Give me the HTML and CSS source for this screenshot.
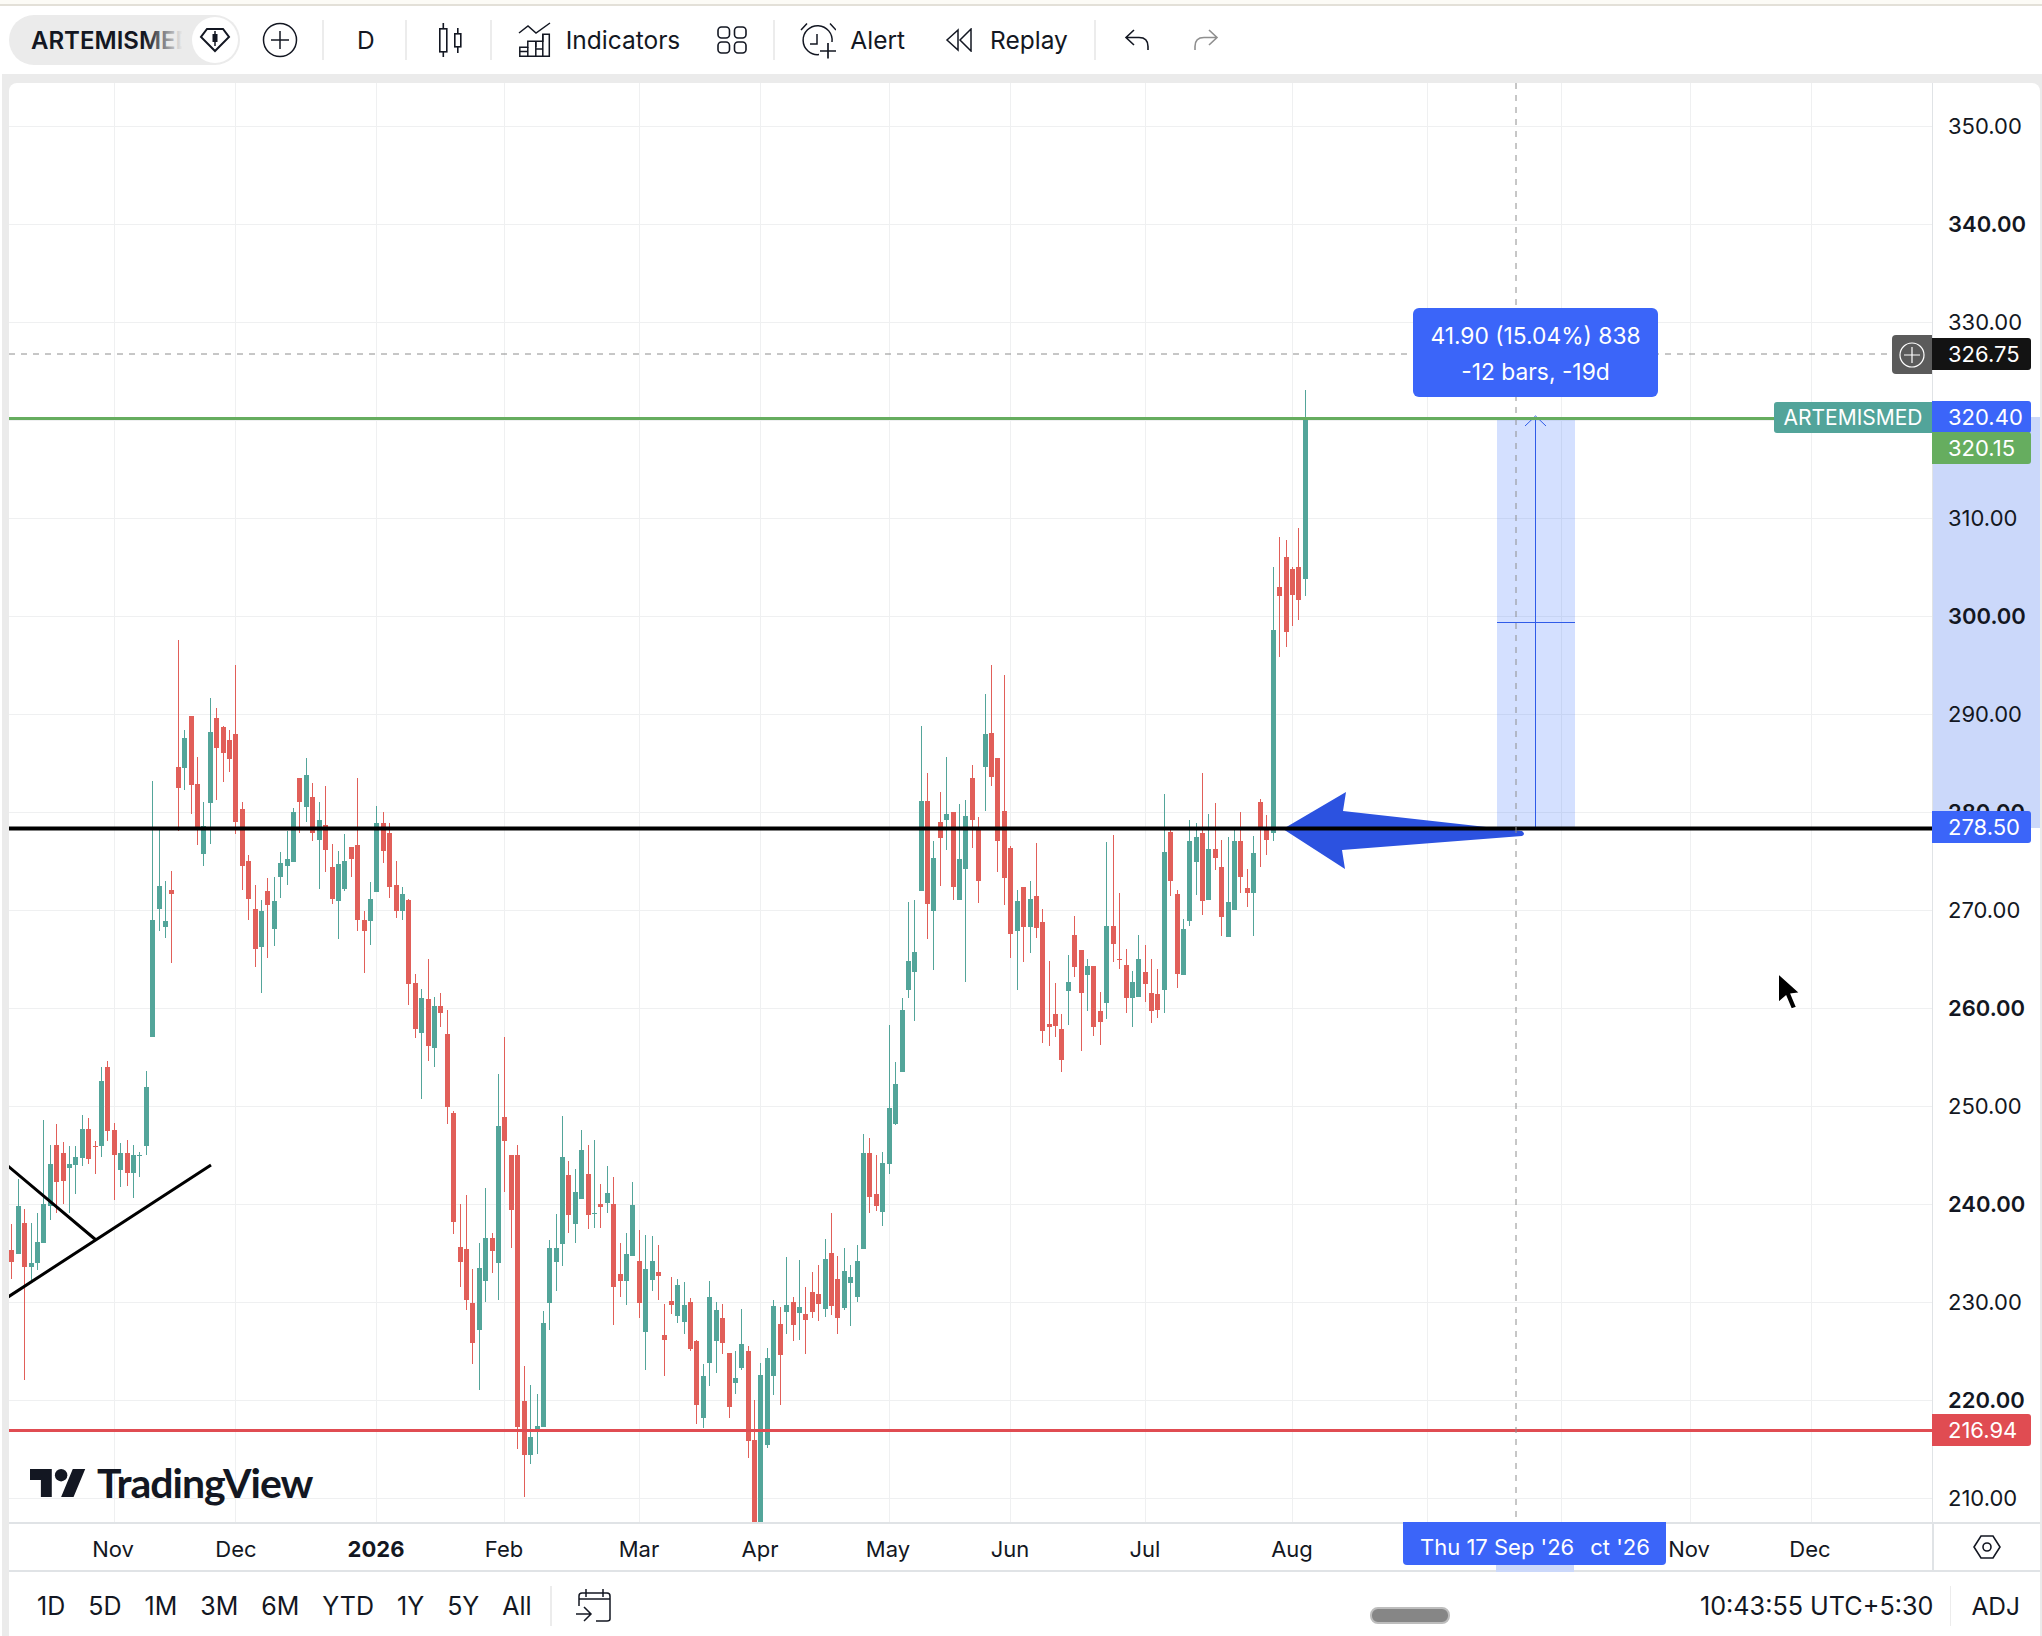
FILE: index.html
```html
<!DOCTYPE html>
<html lang="en">
<head>
    <meta charset="UTF-8">
    <title>ARTEMISMED - TradingView</title>
    <link rel="stylesheet" href="styles.css">
</head>
<body>
    <div class="top-edge"></div>

    <!-- Top toolbar -->
    <header class="toolbar">
        <div class="symbol-pill">
            <span class="symbol-name">ARTEMISMED</span>
            <span class="symbol-badge">
                <svg width="32" height="26" viewBox="0 0 32 26" fill="none" stroke="#131722" stroke-width="2"><path d="M8 2h16l6 8-14 14L2 10z"/><rect x="13.500" y="7" width="5" height="8" fill="#131722" stroke="none"/><path d="M16 4v15" stroke-width="1.500"/></svg>
            </span>
        </div>
        <svg class="ic ic-plus" width="36" height="36" viewBox="0 0 36 36" fill="none" stroke="#131722" stroke-width="1.500"><circle cx="18" cy="18" r="16.500"/><path d="M18 9v18M9 18h18"/></svg>
        <span class="sep sep-a"></span>
        <span class="tool-text tool-d">D</span>
        <span class="sep sep-b"></span>
        <svg class="ic ic-candle" width="24" height="36" viewBox="0 0 24 36" fill="none" stroke="#131722" stroke-width="1.600"><rect x="1.800" y="6.800" width="7" height="23"/><path d="M5.300 1v5.800M5.300 30v5"/><rect x="16.800" y="11.800" width="6" height="13"/><path d="M19.800 6v5.800M19.800 25v6"/></svg>
        <span class="sep sep-c"></span>
        <div class="tool tool-indicators">
            <svg width="33" height="36" viewBox="0 0 33 36" fill="none" stroke="#131722" stroke-width="1.500"><path d="M1 11l9-7 8 7L32 1"/><path d="M1.800 34.200v-9h8v-6h8v6-6h7v-7h6.500v22z"/><path d="M9.800 25.200v9M17.800 19.200v15M24.800 12.200v22M1.800 29.500h8M17.800 27h7"/></svg>
            <span>Indicators</span>
        </div>
        <svg class="ic ic-layout" width="30" height="28" viewBox="0 0 30 28" fill="none" stroke="#131722" stroke-width="1.600"><rect x="1" y="1" width="11.500" height="11" rx="3.500"/><rect x="17.500" y="1" width="11.500" height="11" rx="3.500"/><rect x="1" y="16" width="11.500" height="11" rx="3.500"/><rect x="17.500" y="16" width="11.500" height="11" rx="3.500"/></svg>
        <span class="sep sep-d"></span>
        <div class="tool tool-alert">
            <svg width="36" height="37" viewBox="0 0 36 37" fill="none" stroke="#131722" stroke-width="1.500"><path d="M19 32.600A14.500 14.500 0 1 1 32 20"/><path d="M17 12v10h-7"/><path d="M1 8l6-6.500M30 1.500L36 8"/><path d="M28 21v15.500M20 29h16" stroke-width="1.700"/></svg>
            <span>Alert</span>
        </div>
        <div class="tool tool-replay">
            <svg width="27" height="24" viewBox="0 0 27 24" fill="none" stroke="#131722" stroke-width="1.500"><path d="M13 2L2 12l11 10zM26 1L15 12l11 11z"/></svg>
            <span>Replay</span>
        </div>
        <span class="sep sep-e"></span>
        <svg class="ic ic-undo" width="25" height="22" viewBox="0 0 25 22" fill="none" stroke="#131722" stroke-width="1.600"><path d="M10 1L2 8.500l8 7.500M2 8.500h13q9 0 9 9V21"/></svg>
        <svg class="ic ic-redo" width="25" height="22" viewBox="0 0 25 22" fill="none" stroke="#8f8f8f" stroke-width="1.600"><path d="M15 1l8 7.500-8 7.500M23 8.500H10q-9 0-9 9V21"/></svg>
    </header>

    <main class="workspace">
        <div class="chart-card">
            <div class="chart-row">
                <!-- Candles and drawings, in page pixels -->
                <div class="pane">
                    <svg id="chart" class="chart-svg" viewBox="9 83 1923 1439">
                        <g id="grid" class="grid" shape-rendering="crispEdges"></g>
                        <rect class="measure-box" x="1497" y="417" width="78" height="411"/>
                        <g id="candles" shape-rendering="crispEdges"></g>
                        <path class="measure-line" d="M1535.500 417V828M1497 622.500H1575M1525 426l10.500-10 10.500 10"/>
                        <path class="draw-arrow" d="M1283 829L1346 792L1343 811L1522 831Q1526 834 1522 836L1342 850L1345 869Z"/>
                        <path class="trend" d="M8 1166L96 1240M8 1297L211 1165"/>
                        <path class="line-green" d="M9 418.500H1932"/>
                        <path class="line-black" d="M9 828.500H1932"/>
                        <path class="line-red" d="M9 1430.500H1932"/>
                        <path class="cross" d="M1516 83V1517M9 354H1892"/>
                    </svg>

                    <div class="logo">
                        <svg width="56" height="28" viewBox="0 0 36 18" fill="#131722"><path d="M14 18H7V7H0V0h14zM28 18h-8L27.500 0h8z"/><circle cx="20" cy="4" r="4"/></svg>
                        <span>TradingView</span>
                    </div>

                    <div class="measure-tip">
                        <div>41.90 (15.04%) 838</div>
                        <div>-12 bars, -19d</div>
                    </div>

                    <div class="add-box">
                        <svg width="26" height="26" viewBox="0 0 26 26" fill="none" stroke="#fff" stroke-width="1.200"><circle cx="13" cy="13" r="12"/><path d="M13 5v16M5 13h16"/></svg>
                    </div>
                    <div class="symbol-tag">ARTEMISMED</div>

                    <svg class="cursor" width="24" height="42" viewBox="0 0 22 38"><path d="M2 1v27l7-6 5 12 5-2-5-12 8-1z" fill="#000" stroke="#fff" stroke-width="1.500"/></svg>
                </div>
                <div id="price-axis" class="price-axis"></div>
            </div>

            <div id="time-row" class="time-row">
                <div id="time-axis" class="time-axis">
                    <span class="time-band"></span>
                    <div class="time-flag"><span>Thu 17 Sep '26</span><span>ct '26</span></div>
                </div>
                <div class="time-corner">
                    <svg width="28" height="24" viewBox="0 0 28 24" fill="none" stroke="#131722" stroke-width="1.600"><path d="M8 1h12l7 11-7 11H8L1 12z"/><circle cx="14" cy="12" r="4"/></svg>
                </div>
            </div>

            <footer class="range-row">
                <div class="ranges">
                    <span>1D</span><span>5D</span><span>1M</span><span>3M</span><span>6M</span><span>YTD</span><span>1Y</span><span>5Y</span><span>All</span>
                </div>
                <span class="sep sep-range"></span>
                <svg class="ic-date" width="35" height="33" viewBox="0 0 35 33" fill="none" stroke="#131722" stroke-width="1.500"><path d="M3 17V7q0-3 3-3h25q3 0 3 3v23q0 2-3 2H20M3 10h31M10 0v8M27 0v8"/><path d="M0 25h14M8 18l7 7-7 7"/></svg>
                <span class="scroll-pill"></span>
                <span class="clock">10:43:55 UTC+5:30</span>
                <span class="sep sep-adj"></span>
                <span class="adj">ADJ</span>
            </footer>
        </div>
    </main>

    <script src="chart.js"></script>
</body>
</html>
```

FILE: styles.css
```css
* {
    box-sizing: border-box;
}
body {
    margin: 0;
    height: 1636px;
    overflow: hidden;
    font-family: Inter, "Liberation Sans", sans-serif;
    color: #131722;
    background-color: #fff;
}
svg {
    display: block;
    flex: none;
}
.top-edge {
    height: 6px;
    background-color: #fcfbf6;
    border-bottom: 2px solid #e3e0d8;
}

/* Toolbar */
.toolbar {
    display: flex;
    align-items: center;
    height: 68px;
    padding-left: 9px;
    font-size: 24.500px;
}
.symbol-pill {
    display: flex;
    align-items: center;
    width: 231px;
    height: 50px;
    padding-left: 22px;
    border-radius: 25px;
    background-color: #ebebeb;
    position: relative;
    font-size: 24px;
}
.symbol-name {
    width: 160px;
    overflow: hidden;
    font-weight: 600;
    white-space: nowrap;
}
.symbol-name::after {
    content: "";
    position: absolute;
    left: 136px;
    top: 0;
    width: 50px;
    height: 50px;
    background: linear-gradient(to right, rgba(235, 235, 235, 0), #ebebeb 75%);
}
.symbol-badge {
    display: flex;
    align-items: center;
    justify-content: center;
    position: absolute;
    right: 2px;
    top: 2px;
    width: 46px;
    height: 46px;
    border-radius: 50%;
    background-color: #fff;
}
.ic-plus { margin-left: 22px; }
.ic-candle { margin-left: 31px; }
.ic-layout { margin-left: 37px; }
.ic-undo { margin-left: 28px; }
.ic-redo { margin-left: 45px; }
.sep {
    flex: none;
    width: 2px;
    height: 40px;
    background-color: #ececec;
}
.sep-a { margin-left: 24px; }
.sep-b { margin-left: 30px; }
.sep-c { margin-left: 28px; }
.sep-d { margin-left: 26px; }
.sep-e { margin-left: 26px; }
.tool-d { margin-left: 33px; }
.tool {
    display: flex;
    align-items: center;
}
.tool-indicators { margin-left: 26px; gap: 15px; }
.tool-alert { margin-left: 25px; gap: 14px; }
.tool-replay { margin-left: 40px; gap: 18px; }

/* Chart */
.workspace {
    height: 1562px;
    padding: 9px 2px 0 7px;
    border-left: 2px solid #fff;
    background-color: #ebebeb;
}
.chart-card {
    height: 100%;
    border-radius: 8px 8px 0 0;
    background-color: #fff;
    overflow: hidden;
}
.chart-row {
    display: flex;
    height: 1439px;
}
.pane {
    position: relative;
    width: 1923px;
    flex: none;
}
.chart-svg {
    width: 1923px;
    height: 1439px;
}
.grid path {
    stroke: #eff0f1;
    stroke-width: 1;
    fill: none;
}
.measure-box {
    fill: #2962ff;
    fill-opacity: 0.2;
}
.measure-line {
    fill: none;
    stroke: #2f5be8;
    stroke-width: 1;
}
.draw-arrow {
    fill: #2c52e0;
}
.trend {
    fill: none;
    stroke: #000;
    stroke-width: 3;
}
.line-green {
    stroke: #66ad5f;
    stroke-width: 3;
}
.line-black {
    stroke: #000;
    stroke-width: 4;
}
.line-red {
    stroke: #e04c52;
    stroke-width: 3;
}
.cross {
    fill: none;
    stroke: #8e8e8e;
    stroke-width: 1;
    stroke-dasharray: 6 6;
}
.logo {
    position: absolute;
    left: 21px;
    top: 1375px;
    display: flex;
    align-items: center;
    gap: 11px;
    font-family: Lato, Inter, sans-serif;
    font-size: 41px;
    font-weight: 700;
    letter-spacing: -1px;
    white-space: nowrap;
}
.measure-tip {
    position: absolute;
    left: 1404px;
    top: 225px;
    width: 245px;
    height: 89px;
    padding-top: 10px;
    border-radius: 6px;
    background-color: #3b65f9;
    color: #fff;
    font-size: 22.800px;
    line-height: 36px;
    text-align: center;
    white-space: nowrap;
}
.add-box {
    position: absolute;
    right: 0;
    top: 252px;
    display: flex;
    align-items: center;
    justify-content: center;
    width: 40px;
    height: 39px;
    border-radius: 4px 0 0 4px;
    background-color: #5b5b5b;
}
.symbol-tag {
    position: absolute;
    right: 0;
    top: 319px;
    width: 158px;
    height: 31px;
    border-radius: 3px 0 0 3px;
    background-color: #52a49a;
    color: #fff;
    font-size: 21px;
    line-height: 31px;
    text-align: center;
}
.cursor {
    position: absolute;
    left: 1767px;
    top: 889px;
}

/* Price axis */
.price-axis {
    position: relative;
    width: 108px;
    flex: none;
    border-left: 1px solid #e0e3e6;
    font-size: 22px;
}
.price-band {
    position: absolute;
    left: 0;
    right: 0;
    top: 334px;
    height: 411px;
    background-color: #cbd8fa;
}
.price {
    position: absolute;
    left: 15px;
    transform: translateY(-50%);
    line-height: 24px;
}
.price.major {
    font-weight: 600;
}
.mark {
    position: absolute;
    left: -1px;
    width: 99px;
    height: 32px;
    padding-left: 16px;
    border-radius: 0 3px 3px 0;
    color: #fff;
    line-height: 32px;
    transform: translateY(-50%);
}

/* Time axis */
.time-row {
    display: flex;
    height: 50px;
    border-top: 2px solid #e0e3e6;
    border-bottom: 2px solid #e0e3e6;
    font-size: 22px;
}
.time-axis {
    position: relative;
    width: 1923px;
    flex: none;
}
.time-label {
    position: absolute;
    top: 13px;
    line-height: 24px;
    transform: translateX(-50%);
}
.time-label.major {
    font-weight: 700;
}
.time-band {
    position: absolute;
    left: 1487px;
    width: 78px;
    top: 40px;
    height: 8px;
    background-color: #cbd8fa;
}
.time-flag {
    position: absolute;
    left: 1394px;
    top: -2px;
    display: flex;
    gap: 16px;
    width: 263px;
    height: 43px;
    padding: 12px 0 0 17px;
    border-radius: 0 0 4px 4px;
    background-color: #3b65f9;
    color: #fff;
    font-size: 22px;
    line-height: 26px;
    white-space: nowrap;
}
.time-corner {
    display: flex;
    align-items: center;
    justify-content: center;
    width: 108px;
    border-left: 2px solid #e0e3e6;
}

/* Bottom bar */
.range-row {
    position: relative;
    display: flex;
    align-items: center;
    height: 64px;
    padding: 3px 0 0 28px;
    font-size: 25px;
}
.ranges {
    display: flex;
    gap: 23px;
}
.sep-range { margin-left: 18px; }
.ic-date { margin-left: 24px; }
.scroll-pill {
    position: absolute;
    left: 1361px;
    top: 35px;
    width: 80px;
    height: 17px;
    border: 2px solid #bdbdbd;
    border-radius: 8px;
    background-color: #868686;
}
.clock {
    margin-left: auto;
    white-space: nowrap;
    font-size: 25.200px;
}
.sep-adj {
    width: 1px;
    margin-left: 17px;
}
.adj {
    margin: 0 20px 0 20px;
    font-size: 24.500px;
}
```

FILE: chart.js
```js
// Daily candles in page pixels: x, colour, wick top, body top, body bottom, wick bottom
const CANDLES = [
    [11,'r',1224,1250,1262,1279], [18,'g',1179,1206,1254,1254], [24,'r',1209,1223,1267,1380], [31,'g',1223,1263,1267,1280],
    [37,'g',1213,1242,1263,1270], [43,'g',1120,1204,1243,1243], [50,'g',1145,1164,1206,1220], [56,'r',1124,1145,1182,1213],
    [63,'r',1142,1153,1181,1204], [69,'g',1146,1164,1168,1213], [75,'g',1146,1157,1165,1194], [82,'g',1115,1129,1158,1166],
    [88,'r',1118,1129,1159,1164], [95,'r',1141,1146,1147,1174], [101,'g',1067,1081,1146,1157], [107,'r',1061,1067,1131,1141],
    [114,'r',1123,1130,1155,1200], [120,'g',1143,1153,1170,1187], [127,'r',1140,1153,1173,1186], [133,'g',1145,1155,1173,1198],
    [139,'g',1152,1155,1156,1177], [146,'g',1071,1087,1146,1155], [152,'g',781,920,1037,1037], [159,'g',827,886,909,931],
    [165,'g',881,921,927,938], [171,'r',871,890,894,963], [178,'r',640,767,788,831], [184,'g',730,738,768,790],
    [191,'r',716,716,785,814], [197,'r',757,784,829,845], [203,'g',802,826,854,866], [210,'g',698,732,803,844],
    [216,'r',708,718,748,800], [223,'r',726,727,753,782], [229,'r',730,740,759,772], [235,'r',665,734,822,834],
    [242,'r',802,809,866,890], [248,'r',855,861,899,920], [255,'r',885,909,949,967], [261,'g',900,911,947,993],
    [267,'r',878,891,905,958], [274,'g',877,901,929,946], [280,'g',852,863,877,898], [287,'g',831,859,866,885],
    [293,'g',808,812,862,862], [299,'r',778,778,802,833], [306,'g',758,775,807,822], [312,'r',783,797,833,841],
    [319,'g',802,820,840,889], [325,'r',786,825,850,872], [332,'r',844,867,899,904], [338,'g',851,864,901,939],
    [344,'g',834,861,889,891], [351,'r',847,847,859,877], [357,'r',778,845,920,931], [364,'r',911,920,931,973],
    [370,'g',882,899,921,945], [376,'g',806,823,892,892], [383,'r',812,823,851,863], [389,'r',823,833,887,898],
    [396,'r',861,885,911,918], [402,'g',887,894,911,920], [408,'r',899,900,984,1005], [415,'r',974,983,1029,1038],
    [421,'g',989,998,1033,1099], [428,'r',959,999,1046,1061], [434,'g',997,1006,1048,1067], [440,'r',993,1006,1013,1027],
    [447,'r',1010,1034,1107,1124], [453,'r',1111,1113,1222,1234], [460,'r',1204,1247,1262,1287], [466,'r',1195,1249,1300,1310],
    [472,'r',1269,1303,1343,1364], [479,'g',1243,1268,1330,1390], [485,'g',1188,1238,1281,1302], [492,'r',1233,1238,1251,1273],
    [498,'g',1074,1126,1263,1300], [504,'r',1037,1117,1141,1192], [511,'r',1155,1155,1210,1248], [517,'r',1145,1155,1427,1449],
    [524,'r',1366,1401,1455,1497], [530,'g',1385,1437,1455,1464], [537,'g',1394,1426,1431,1454], [543,'g',1311,1323,1427,1427],
    [549,'g',1240,1248,1303,1330], [556,'g',1214,1248,1262,1291], [562,'g',1116,1157,1244,1266], [568,'r',1161,1175,1215,1233],
    [575,'g',1169,1192,1224,1243], [581,'g',1130,1150,1199,1199], [588,'r',1145,1174,1215,1229], [594,'g',1140,1213,1214,1228],
    [600,'r',1184,1204,1207,1228], [607,'g',1166,1193,1203,1213], [613,'r',1177,1204,1287,1325], [620,'r',1243,1274,1281,1297],
    [626,'g',1233,1254,1281,1305], [632,'g',1182,1205,1256,1256], [639,'r',1230,1261,1303,1318], [645,'g',1235,1269,1332,1370],
    [652,'g',1236,1261,1280,1291], [658,'r',1245,1272,1276,1300], [664,'r',1304,1335,1340,1376], [671,'r',1277,1301,1305,1314],
    [677,'g',1279,1285,1316,1323], [684,'g',1282,1305,1322,1334], [690,'r',1298,1302,1349,1351], [696,'r',1340,1341,1405,1424],
    [703,'g',1364,1376,1418,1428], [709,'g',1281,1297,1363,1386], [716,'g',1302,1310,1341,1373], [722,'r',1304,1318,1343,1354],
    [729,'r',1353,1353,1407,1418], [735,'g',1351,1378,1383,1394], [741,'g',1309,1344,1368,1370], [748,'r',1346,1351,1441,1458],
    [754,'r',1400,1440,1522,1522], [760,'g',1363,1375,1522,1522], [767,'g',1348,1358,1445,1448], [773,'g',1300,1306,1376,1395],
    [780,'r',1307,1324,1355,1405], [786,'g',1257,1305,1312,1334], [793,'r',1297,1302,1325,1341], [799,'g',1260,1307,1313,1340],
    [805,'r',1287,1314,1320,1354], [812,'r',1272,1292,1312,1318], [818,'r',1265,1294,1304,1321], [825,'g',1239,1259,1309,1317],
    [831,'r',1213,1253,1306,1315], [837,'r',1256,1279,1318,1334], [844,'g',1248,1271,1308,1310], [850,'g',1265,1277,1283,1326],
    [857,'g',1245,1261,1297,1302], [863,'g',1134,1153,1249,1249], [869,'r',1138,1153,1197,1213], [876,'r',1155,1194,1206,1211],
    [882,'g',1152,1163,1212,1226], [889,'g',1025,1108,1164,1174], [895,'g',1062,1084,1124,1125], [902,'g',998,1010,1072,1072],
    [908,'g',902,961,990,998], [914,'g',900,952,972,1021], [921,'g',726,801,891,891], [927,'r',773,801,904,939],
    [933,'g',841,858,911,970], [940,'r',792,822,838,886], [946,'g',757,814,820,850], [953,'r',812,812,887,900],
    [959,'g',804,859,900,900], [965,'g',800,816,869,982], [972,'r',765,778,820,848], [978,'r',817,828,881,903],
    [985,'g',694,734,767,811], [991,'r',665,733,777,786], [997,'r',758,758,841,872], [1004,'r',675,811,878,905],
    [1010,'r',846,848,934,958], [1017,'g',890,901,931,990], [1023,'r',887,887,927,962], [1030,'g',881,899,927,953],
    [1036,'r',843,896,928,938], [1042,'r',909,922,1031,1043], [1049,'r',961,1024,1027,1046], [1055,'r',983,1014,1026,1037],
    [1061,'r',1014,1029,1060,1072], [1068,'g',955,982,991,1025], [1074,'r',916,935,967,977], [1081,'r',950,950,993,1051],
    [1087,'g',959,966,975,1011], [1093,'r',966,966,1027,1036], [1100,'r',992,1011,1022,1045], [1106,'g',842,926,1003,1019],
    [1113,'r',835,926,944,962], [1119,'r',893,959,960,969], [1126,'r',949,965,998,1013], [1132,'g',971,982,998,1027],
    [1138,'g',935,959,997,997], [1145,'r',945,972,984,1002], [1151,'r',959,993,1011,1023], [1157,'r',969,994,1010,1018],
    [1164,'g',794,852,990,1013], [1170,'r',828,832,881,896], [1177,'r',890,894,974,988], [1183,'g',919,929,975,975],
    [1189,'g',820,841,921,926], [1196,'g',823,837,862,895], [1202,'r',773,833,901,915], [1208,'g',814,849,900,900],
    [1215,'r',803,849,858,870], [1221,'r',840,867,917,936], [1228,'g',837,902,937,937], [1234,'g',828,841,910,910],
    [1240,'r',812,841,877,893], [1247,'r',869,888,893,907], [1253,'g',836,853,893,936], [1260,'r',799,802,827,867],
    [1266,'r',815,828,840,855], [1273,'g',567,630,833,841], [1279,'r',537,587,596,657], [1286,'r',540,557,632,647],
    [1292,'r',567,569,595,626], [1298,'r',528,567,600,620], [1305,'g',390,417,579,596]
];

const COLORS = { g: '#53a59a', r: '#e15f59' };
const GRID_X = [114, 235, 376, 504, 639, 760, 889, 1010, 1145, 1292, 1427, 1561, 1690, 1811];
const TIME_LABELS = [
    ['Nov', 113], ['Dec', 236], ['2026', 376, true], ['Feb', 504], ['Mar', 639], ['Apr', 760],
    ['May', 888], ['Jun', 1010], ['Jul', 1145], ['Aug', 1292], ['Nov', 1689], ['Dec', 1810]
];
const BOLD_PRICES = [340, 300, 280, 260, 240, 220];

// y position of a price, 9.8px for each point, 350 sits at y=126
function priceY(price) {
    return 126 + (350 - price) * 9.8;
}

function drawGrid() {
    let d = '';
    GRID_X.forEach(function(x) { d += 'M' + x + '.5 83V1522'; });
    for (let price = 350; price >= 210; price -= 10) {
        d += 'M9 ' + Math.round(priceY(price)) + '.5H1932';
    }
    document.getElementById('grid').innerHTML = '<path d="' + d + '"/>';
}

function drawCandles() {
    let html = '';
    CANDLES.forEach(function(c) {
        const x = c[0], fill = COLORS[c[1]];
        html += '<rect x="' + x + '" y="' + c[2] + '" width="1" height="' + (c[5] - c[2]) + '" fill="' + fill + '"/>';
        html += '<rect x="' + (x - 2) + '" y="' + c[3] + '" width="5" height="' + Math.max(c[4] - c[3], 1) + '" fill="' + fill + '"/>';
    });
    document.getElementById('candles').innerHTML = html;
}

function drawPriceAxis() {
    const axis = document.getElementById('price-axis');
    let html = '<div class="price-band"></div>';
    for (let price = 350; price >= 210; price -= 10) {
        const major = BOLD_PRICES.indexOf(price) !== -1 ? ' major' : '';
        html += '<div class="price' + major + '" style="top:' + (priceY(price) - 83) + 'px">' + price.toFixed(2) + '</div>';
    }
    // y comes from the price, except the 320.15 tag which gets pushed below 320.40
    const marks = [
        ['326.75', 354, '#131313'],
        ['320.40', 417, '#3b65f9'],
        ['320.15', 448, '#66ad5f'],
        ['278.50', 827, '#3b65f9'],
        ['216.94', 1430, '#e04c52']
    ];
    marks.forEach(function(m) {
        html += '<div class="mark" style="top:' + (m[1] - 83) + 'px;background-color:' + m[2] + '">' + m[0] + '</div>';
    });
    axis.innerHTML = html;
}

function drawTimeAxis() {
    const axis = document.getElementById('time-axis');
    let html = '';
    TIME_LABELS.forEach(function(t) {
        html += '<span class="time-label' + (t[2] ? ' major' : '') + '" style="left:' + (t[1] - 9) + 'px">' + t[0] + '</span>';
    });
    axis.insertAdjacentHTML('afterbegin', html);
}

drawGrid();
drawCandles();
drawPriceAxis();
drawTimeAxis();
```
